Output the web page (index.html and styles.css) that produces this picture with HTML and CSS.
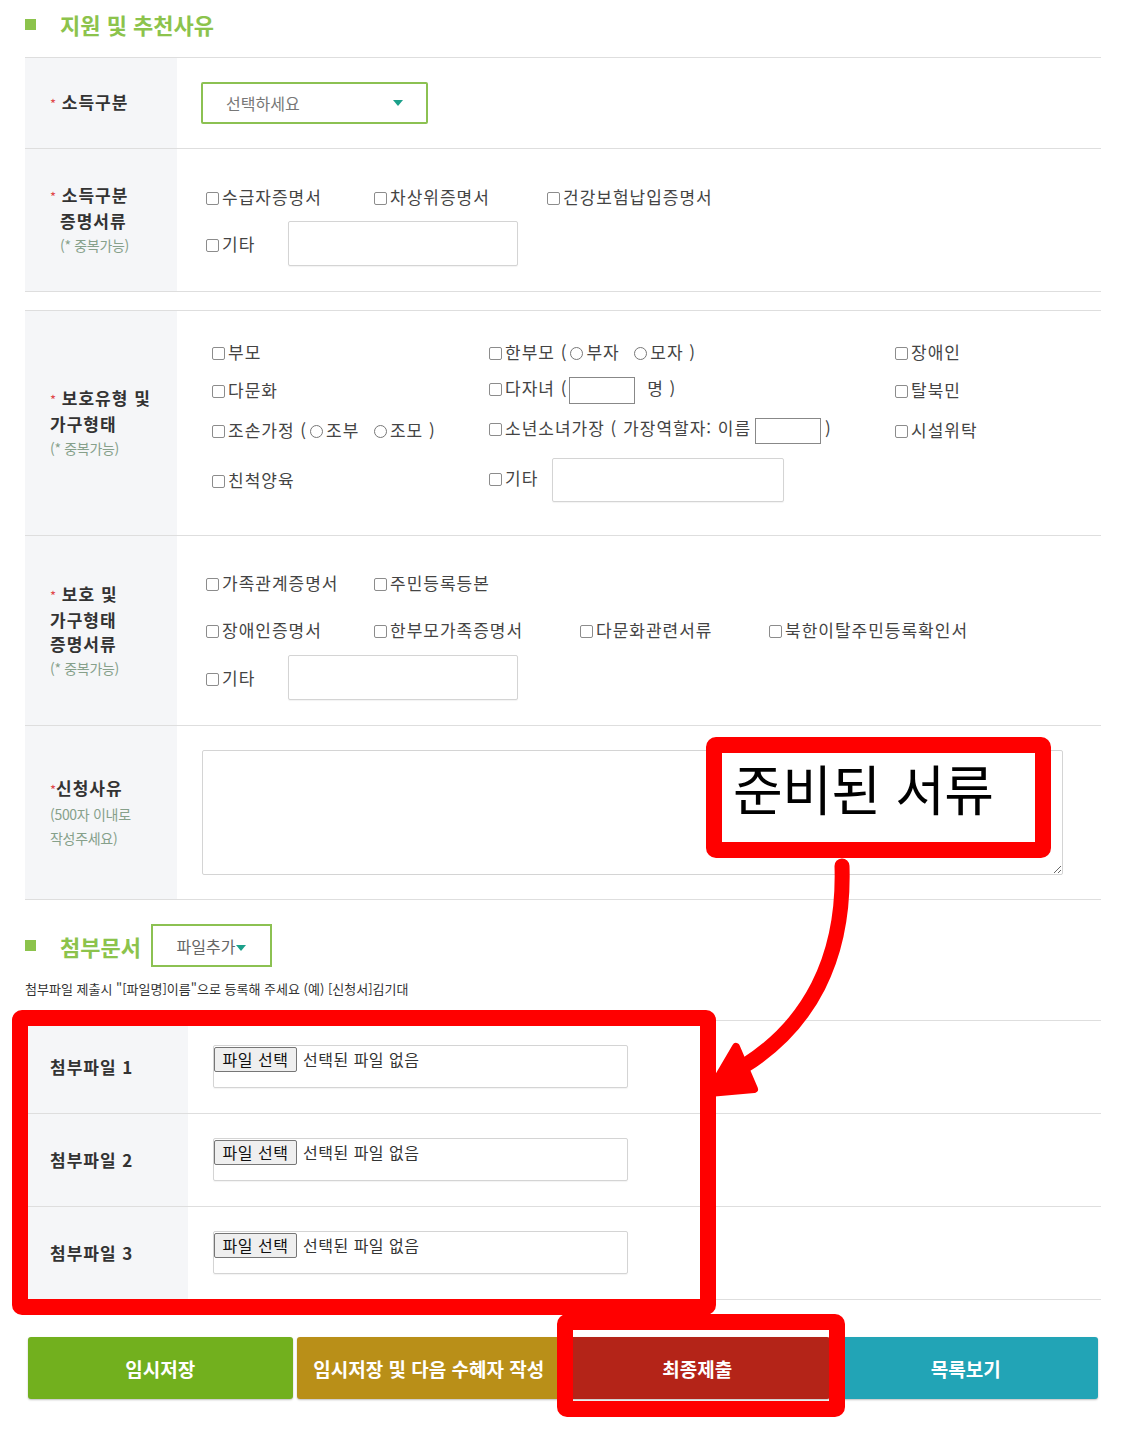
FILE: index.html
```html
<!DOCTYPE html>
<html lang="ko">
<head>
<meta charset="utf-8">
<title>지원 및 추천사유</title>
<link rel="stylesheet" href="styles.css">
</head>
<body>
<div class="page">
  <h2 class="sec-title"><span class="sq"></span>지원 및 추천사유</h2>

  <div class="tbl">
    <div class="row">
      <div class="th"><div><span class="req">*</span> 소득구분</div></div>
      <div class="td td-select">
        <div class="select"><span>선택하세요</span><span class="caret"></span></div>
      </div>
    </div>
    <div class="row">
      <div class="th">
        <div><span class="req">*</span> 소득구분</div>
        <div class="ind">증명서류</div>
        <div class="sub ind">(* 중복가능)</div>
      </div>
      <div class="td td-income">
        <div class="cbrow">
          <label class="cb w168"><i class="box"></i>수급자증명서</label>
          <label class="cb w173"><i class="box"></i>차상위증명서</label>
          <label class="cb"><i class="box"></i>건강보험납입증명서</label>
        </div>
        <div class="cbrow etc">
          <label class="cb w82"><i class="box"></i>기타</label>
          <input class="txt" type="text">
        </div>
      </div>
    </div>
  </div>

  <div class="tbl tbl2">
    <div class="row">
      <div class="th">
        <div><span class="req">*</span> 보호유형 및</div>
        <div>가구형태</div>
        <div class="sub">(* 중복가능)</div>
      </div>
      <div class="td td-grid">
        <div class="cb"><i class="box"></i>부모</div>
        <div class="cb"><i class="box"></i>한부모 (<i class="rd"></i>부자 &nbsp;<i class="rd"></i>모자 )</div>
        <div class="cb"><i class="box"></i>장애인</div>
        <div class="cb"><i class="box"></i>다문화</div>
        <div class="cb"><i class="box"></i>다자녀 (<input class="mini" type="text"> 명 )</div>
        <div class="cb"><i class="box"></i>탈북민</div>
        <div class="cb"><i class="box"></i>조손가정 (<i class="rd"></i>조부 &nbsp;<i class="rd"></i>조모 )</div>
        <div class="cb"><i class="box"></i>소년소녀가장 ( 가장역할자: 이름<input class="mini sm" type="text">)</div>
        <div class="cb"><i class="box"></i>시설위탁</div>
        <div class="cb"><i class="box"></i>친척양육</div>
        <div class="cb"><span class="etc-l"><i class="box"></i>기타</span><input class="txt" type="text"></div>
        <div></div>
      </div>
    </div>
    <div class="row">
      <div class="th">
        <div><span class="req">*</span> 보호 및</div>
        <div>가구형태</div>
        <div>증명서류</div>
        <div class="sub">(* 중복가능)</div>
      </div>
      <div class="td td-docs">
        <div class="cbrow">
          <label class="cb w168"><i class="box"></i>가족관계증명서</label>
          <label class="cb"><i class="box"></i>주민등록등본</label>
        </div>
        <div class="cbrow r2">
          <label class="cb w168"><i class="box"></i>장애인증명서</label>
          <label class="cb w206"><i class="box"></i>한부모가족증명서</label>
          <label class="cb w189"><i class="box"></i>다문화관련서류</label>
          <label class="cb"><i class="box"></i>북한이탈주민등록확인서</label>
        </div>
        <div class="cbrow etc">
          <label class="cb w82"><i class="box"></i>기타</label>
          <input class="txt" type="text">
        </div>
      </div>
    </div>
    <div class="row">
      <div class="th">
        <div><span class="req">*</span>신청사유</div>
        <div class="sub">(500자 이내로</div>
        <div class="sub">작성주세요)</div>
      </div>
      <div class="td td-reason"><textarea class="area"></textarea></div>
    </div>
  </div>

  <div class="att-head">
    <span class="sq"></span><span class="att-title">첨부문서</span>
    <span class="addbtn">파일추가<span class="caret sm"></span></span>
  </div>
  <p class="note">첨부파일 제출시 "[파일명]이름"으로 등록해 주세요 (예) [신청서]김기대</p>

  <div class="tbl ftbl">
    <div class="row">
      <div class="th"><div>첨부파일 1</div></div>
      <div class="td"><div class="filebox"><span class="fbtn">파일 선택</span><span class="fname">선택된 파일 없음</span></div></div>
    </div>
    <div class="row">
      <div class="th"><div>첨부파일 2</div></div>
      <div class="td"><div class="filebox"><span class="fbtn">파일 선택</span><span class="fname">선택된 파일 없음</span></div></div>
    </div>
    <div class="row">
      <div class="th"><div>첨부파일 3</div></div>
      <div class="td"><div class="filebox"><span class="fbtn">파일 선택</span><span class="fname">선택된 파일 없음</span></div></div>
    </div>
  </div>

  <div class="btns">
    <button class="btn green" type="button">임시저장</button>
    <button class="btn gold" type="button">임시저장 및 다음 수혜자 작성</button>
    <button class="btn red" type="button">최종제출</button>
    <button class="btn teal" type="button">목록보기</button>
  </div>
</div>

<div class="anno a1">준비된 서류</div>
<div class="anno a2"></div>
<div class="anno a3"></div>
<svg class="arrow" viewBox="0 0 1132 1440" xmlns="http://www.w3.org/2000/svg">
  <path d="M842 866 C845 960 808 1026 744 1066" fill="none" stroke="#ff0000" stroke-width="15" stroke-linecap="round"/>
  <polygon points="736,1047 754,1089 709,1093" fill="#ff0000" stroke="#ff0000" stroke-width="8" stroke-linejoin="round"/>
</svg>
</body>
</html>
```

FILE: styles.css
```css
* { box-sizing: border-box; }
html, body { margin: 0; padding: 0; background: #fff; }
body {
  position: relative;
  width: 1132px;
  min-height: 1440px;
  overflow: hidden;
  font-family: "Noto Sans CJK KR", "Noto Sans", sans-serif;
  color: #444;
}
.page { padding: 9px 31px 0 25px; }

.sec-title {
  display: flex;
  align-items: center;
  height: 30px;
  margin: 0 0 18px;
  font-size: 22px;
  font-weight: 700;
  color: #8cc34c;
  letter-spacing: 0;
}
.sq {
  display: inline-block;
  flex: none;
  width: 11px;
  height: 11px;
  background: #8cc34c;
  margin-right: 24px;
}

.tbl { border-top: 1px solid #dedede; }
.tbl2 { margin-top: 18px; }
.row {
  display: grid;
  grid-template-columns: 152px 1fr;
  border-bottom: 1px solid #dedede;
}
.th {
  background: #f5f6f8;
  padding-left: 25px;
  display: flex;
  flex-direction: column;
  justify-content: center;
  font-size: 17px;
  font-weight: 700;
  color: #333;
  line-height: 24px;
  letter-spacing: 1px;
  white-space: nowrap;
}
.th .ind { padding-left: 10px; }
.th .sub {
  font-size: 14px;
  font-weight: 400;
  color: #86a08a;
  letter-spacing: -0.3px;
}
.req { color: #e0484a; font-size: 13px; font-weight: 400; letter-spacing: 0; }
.td { min-width: 0; }

.td-select { padding: 24px 0 24px 24px; }
.select {
  width: 227px;
  height: 42px;
  border: 2px solid #8cc152;
  border-radius: 2px;
  display: flex;
  align-items: center;
  justify-content: space-between;
  padding: 0 23px 0 23px;
  font-size: 16px;
  color: #777;
}
.caret {
  width: 0;
  height: 0;
  border-left: 5px solid transparent;
  border-right: 5px solid transparent;
  border-top: 6px solid #1ba08a;
}

.cb {
  display: inline-block;
  white-space: nowrap;
  font-size: 17px;
  line-height: 24px;
  letter-spacing: 1px;
  color: #444;
}
.box {
  display: inline-block;
  width: 13px;
  height: 13px;
  border: 1px solid #8c8c8c;
  border-radius: 2px;
  vertical-align: -1px;
  margin-right: 3px;
  background: #fff;
}
.rd {
  display: inline-block;
  width: 13px;
  height: 13px;
  border: 1px solid #777;
  border-radius: 50%;
  vertical-align: -1px;
  margin: 0 3px 0 3px;
}
.cbrow { display: flex; align-items: center; height: 24px; }
.w168 { width: 168px; }
.w173 { width: 173px; }
.w206 { width: 206px; }
.w189 { width: 189px; }
.w82 { width: 82px; }

.td-income { padding: 36px 0 25px 29px; }
.cbrow.etc { height: 45px; margin-top: 12px; }
.txt {
  width: 230px;
  height: 45px;
  border: 1px solid #d4d4d4;
  border-radius: 2px;
  margin: 0;
  padding: 0 8px;
  font: inherit;
  background: #fff;
  box-shadow: 0 1px 1px rgba(0, 0, 0, 0.05);
}

.td-grid {
  display: grid;
  grid-template-columns: 277px 406px 1fr;
  grid-template-rows: 38px 38px 42px 58px;
  align-items: center;
  padding: 22px 0 26px 35px;
}
.mini {
  width: 66px;
  height: 27px;
  border: 1px solid #888;
  margin: 0 6px 0 2px;
  padding: 0;
  vertical-align: middle;
  background: #fff;
}
.mini.sm { height: 26px; margin: 0 4px 0 4px; }
.etc-l { display: inline-block; width: 63px; }
.td-grid .txt { width: 232px; height: 44px; vertical-align: middle; }

.td-docs { padding: 35px 0 25px 29px; }
.td-docs .r2 { margin-top: 23px; }
.td-docs .etc { margin-top: 13px; }

.td-reason { padding: 24px 38px 24px 25px; }
.area {
  display: block;
  width: 100%;
  height: 125px;
  margin: 0;
  border: 1px solid #d4d4d4;
  border-radius: 2px;
  resize: both;
  font: inherit;
}

.att-head {
  display: flex;
  align-items: center;
  height: 43px;
  margin-top: 24px;
}
.att-title {
  width: 66px;
  font-size: 22px;
  font-weight: 700;
  color: #8cc34c;
  white-space: nowrap;
}
.addbtn {
  margin-left: 25px;
  width: 121px;
  height: 43px;
  border: 2px solid #8cc152;
  display: flex;
  align-items: center;
  justify-content: center;
  font-size: 16px;
  color: #666;
}
.caret.sm { margin-top: 4px; margin-left: 1px; }
.note {
  margin: 12px 0 21px;
  font-size: 13px;
  line-height: 20px;
  color: #333;
}

.ftbl .row { grid-template-columns: 163px 1fr; }
.ftbl .td { padding: 24px 0 25px 25px; }
.filebox {
  width: 415px;
  height: 43px;
  border: 1px solid #d4d4d4;
  border-radius: 2px;
  display: flex;
  align-items: flex-start;
  padding-top: 1px;
  box-shadow: 0 1px 1px rgba(0, 0, 0, 0.05);
}
.fbtn {
  width: 83px;
  height: 25px;
  background: #efefef;
  border: 1px solid #767676;
  border-radius: 2px;
  font-size: 16px;
  line-height: 23px;
  letter-spacing: 0.5px;
  text-align: center;
  color: #111;
}
.fname {
  margin-left: 6px;
  font-size: 16px;
  line-height: 25px;
  letter-spacing: 0.5px;
  color: #333;
}

.btns { display: flex; gap: 4px; margin: 37px 3px 0; }
.btn {
  flex: 1;
  height: 62px;
  border: none;
  border-radius: 3px;
  color: #fff;
  font: inherit;
  font-size: 19px;
  font-weight: 700;
  letter-spacing: 0;
  box-shadow: 0 1px 2px rgba(0, 0, 0, 0.25);
}
.green { background: #72b01e; }
.gold { background: #b98f18; }
.red { background: #b42418; }
.teal { background: #22a4b6; }

.anno {
  position: absolute;
  border: 16px solid #ff0000;
  border-radius: 10px;
}
.a1 {
  left: 706px;
  top: 737px;
  width: 345px;
  height: 121px;
  background: #fff;
  padding: 8px 0 0 11px;
  font-size: 54px;
  line-height: 54px;
  color: #000;
  letter-spacing: -0.5px;
  white-space: nowrap;
}
.a2 { left: 12px; top: 1010px; width: 704px; height: 305px; }
.a3 { left: 557px; top: 1314px; width: 288px; height: 103px; }
.arrow {
  position: absolute;
  left: 0;
  top: 0;
  width: 1132px;
  height: 1440px;
  pointer-events: none;
}
```
